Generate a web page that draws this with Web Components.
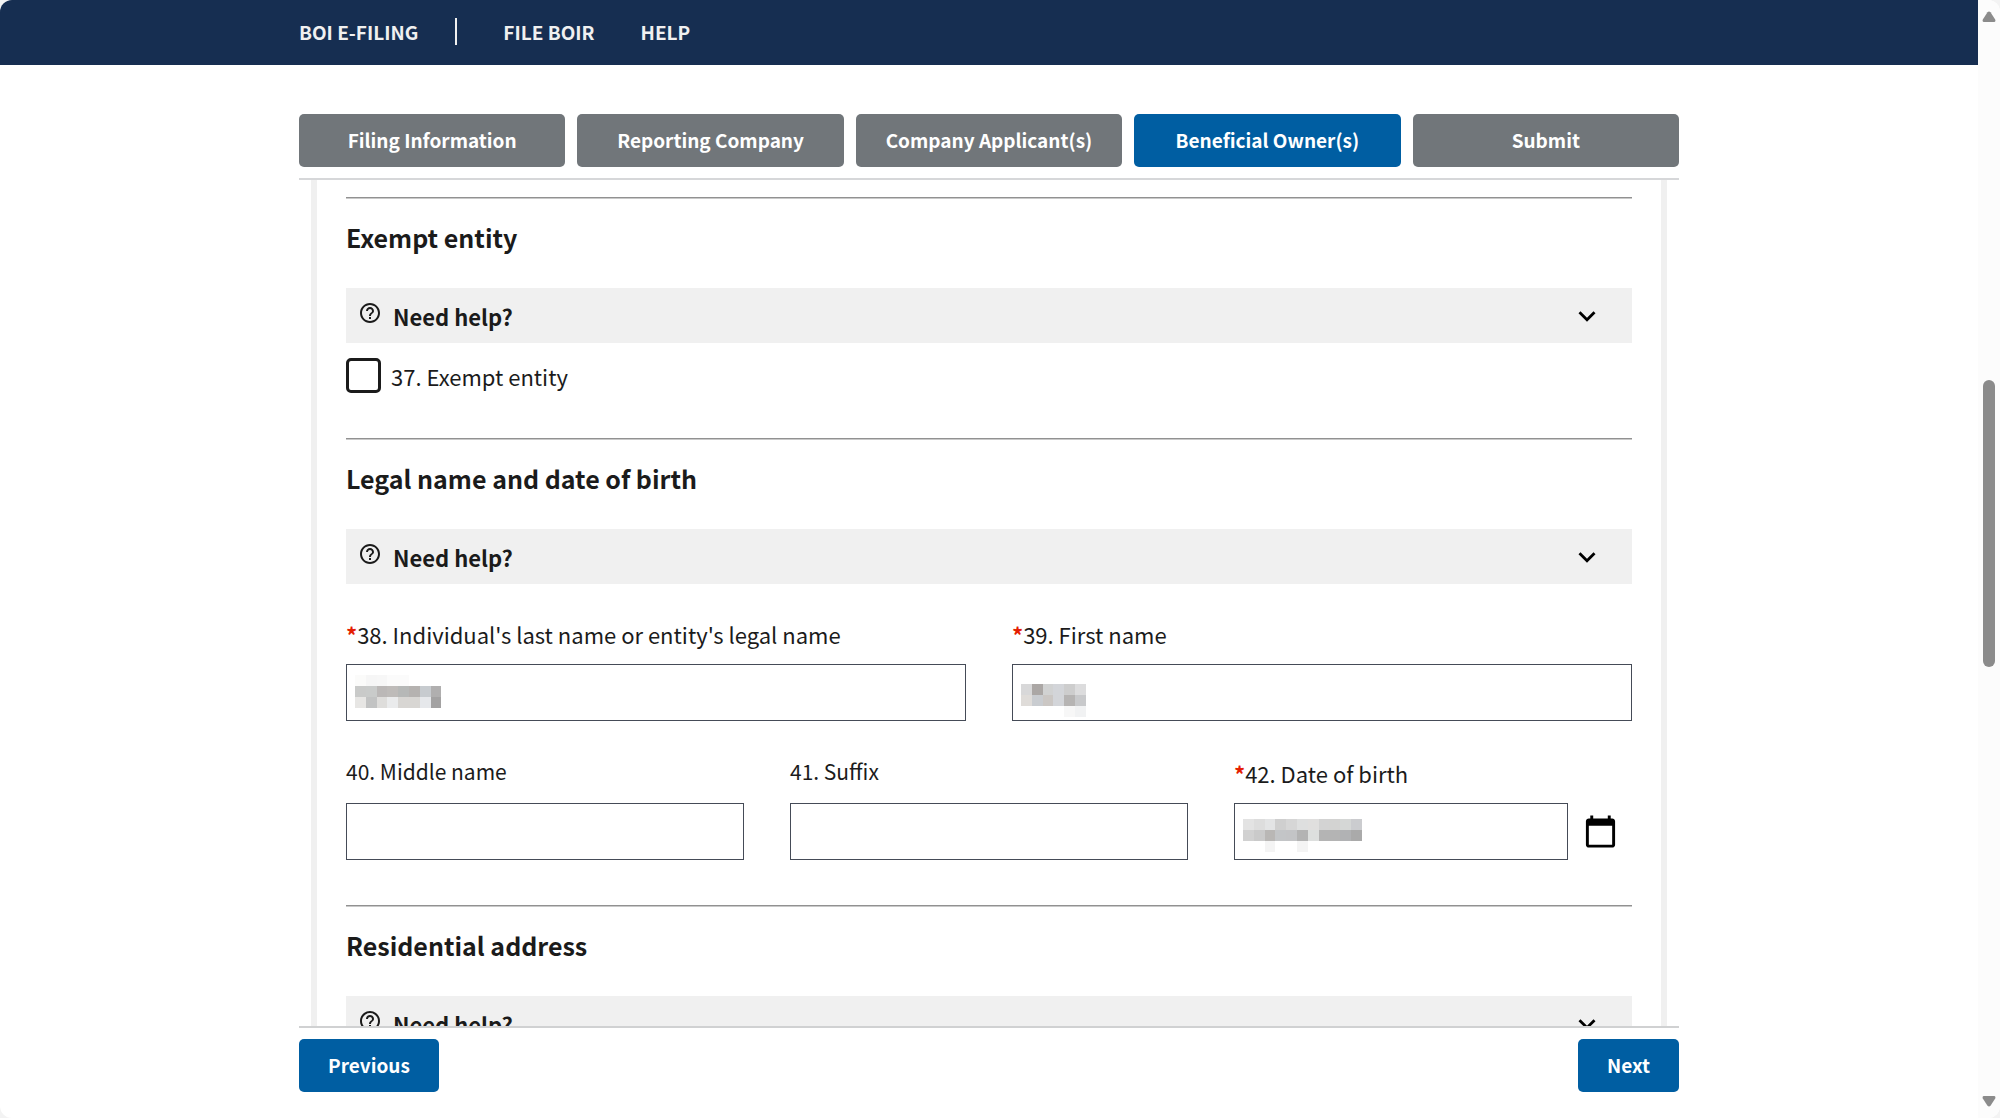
<!DOCTYPE html>
<html lang="en">
<head>
<meta charset="utf-8">
<meta name="viewport" content="width=device-width, initial-scale=1">
<title>BOI E-Filing</title>
<style>
  body {
    margin: 0;
    background: #f3f3f3;
    color: #1b1b1b;
    font-family: "Noto Sans CJK SC", "Open Sans", sans-serif;
    font-size: 22px;
    line-height: 32px;
  }
</style>
</head>
<body>
<boi-app>
  <boi-header slot="header"></boi-header>
  <step-nav slot="steps">
    <step-tab>Filing Information</step-tab>
    <step-tab>Reporting Company</step-tab>
    <step-tab>Company Applicant(s)</step-tab>
    <step-tab current>Beneficial Owner(s)</step-tab>
    <step-tab>Submit</step-tab>
  </step-nav>

  <form-section heading="Exempt entity">
    <check-field label="37. Exempt entity"></check-field>
  </form-section>

  <form-section heading="Legal name and date of birth">
    <field-grid>
      <text-field class="half" required label="38. Individual's last name or entity's legal name" mask="last"></text-field>
      <text-field class="half" required label="39. First name" mask="first"></text-field>
      <text-field label="40. Middle name"></text-field>
      <text-field label="41. Suffix"></text-field>
      <text-field required calendar label="42. Date of birth" mask="birth"></text-field>
    </field-grid>
  </form-section>

  <form-section heading="Residential address"></form-section>

  <pager-bar slot="footer"></pager-bar>
</boi-app>

<script>
class BoiApp extends HTMLElement {
  constructor() {
    super();
    this.attachShadow({ mode: "open" });
  }

  connectedCallback() {
    this.shadowRoot.innerHTML = `
      <style>
        :host {
          display: flex;
          height: 100vh;
          overflow: hidden;
          border-radius: 12px;
          background: #fff;
        }
        .page {
          flex: 1;
          min-width: 0;
          display: flex;
          flex-direction: column;
        }
        .wrap {
          flex: 1;
          min-height: 0;
          display: flex;
          flex-direction: column;
          box-sizing: border-box;
          width: 100%;
          max-width: 1380px;
          margin: 0 auto;
          padding-top: 49px;
        }
        main {
          flex: 1;
          min-height: 0;
          overflow: hidden;
          border-top: 2px solid #d6d7d9;
          border-bottom: 2px solid #d0d1d2;
        }
        .card {
          margin: 0 12px;
          padding: 17px 29px 0;
          border: solid #f0f0f0;
          border-width: 0 6px;
        }
      </style>
      <div class="page">
        <slot name="header"></slot>
        <div class="wrap">
          <slot name="steps"></slot>
          <main><div class="card"><slot></slot></div></main>
          <slot name="footer"></slot>
        </div>
      </div>
      <scroll-rail></scroll-rail>
    `;
  }
}

customElements.define("boi-app", BoiApp);

class BoiHeader extends HTMLElement {
  constructor() {
    super();
    this.attachShadow({ mode: "open" });
  }

  connectedCallback() {
    this.shadowRoot.innerHTML = `
      <style>
        :host {
          display: block;
          background: #162e51;
        }
        nav {
          display: flex;
          align-items: center;
          box-sizing: border-box;
          max-width: 1380px;
          height: 65px;
          margin: 0 auto;
          padding-bottom: 2px;
          font-size: 19px;
          font-weight: 700;
        }
        a {
          color: #f0f0f0;
          text-decoration: none;
        }
        .brand {
          padding-right: 37px;
          margin-right: 46px;
          border-right: 2px solid #f0f0f0;
          line-height: 27px;
        }
        .link { margin-right: 46px; }
      </style>
      <nav aria-label="Primary">
        <a class="brand" href="#">BOI E-FILING</a>
        <a class="link" href="#">FILE BOIR</a>
        <a class="link" href="#">HELP</a>
      </nav>
    `;
  }
}

customElements.define("boi-header", BoiHeader);

class StepNav extends HTMLElement {
  constructor() {
    super();
    this.attachShadow({ mode: "open" });
  }

  connectedCallback() {
    this.shadowRoot.innerHTML = `
      <style>
        :host { display: block; }
        nav {
          display: grid;
          grid-auto-flow: column;
          grid-auto-columns: 1fr;
          gap: 12px;
          padding-bottom: 11px;
        }
      </style>
      <nav aria-label="Filing steps"><slot></slot></nav>
    `;
  }
}

customElements.define("step-nav", StepNav);

class StepTab extends HTMLElement {
  constructor() {
    super();
    this.attachShadow({ mode: "open" });
  }

  connectedCallback() {
    const current = this.hasAttribute("current");
    this.shadowRoot.innerHTML = `
      <style>
        :host { display: block; }
        button {
          width: 100%;
          height: 53px;
          padding: 0 0 2px;
          border: 0;
          border-radius: 5px;
          background: ${current ? "#005ea2" : "#71767a"};
          color: #fff;
          font: inherit;
          font-size: 19px;
          font-weight: 700;
        }
      </style>
      <button type="button" ${current ? 'aria-current="step"' : ""}><slot></slot></button>
    `;
  }
}

customElements.define("step-tab", StepTab);

class FormSection extends HTMLElement {
  constructor() {
    super();
    this.attachShadow({ mode: "open" });
  }

  connectedCallback() {
    this.shadowRoot.innerHTML = `
      <style>
        :host {
          display: block;
          padding-bottom: 45px;
        }
        hr {
          margin: 0;
          border: 0;
          border-top: 1px solid #919191;
          border-bottom: 1px solid #c9c9c9;
        }
        h2 {
          margin: 22px 0 35px;
          font-size: 25px;
          line-height: 32px;
          font-weight: 700;
        }
      </style>
      <hr>
      <h2>${this.getAttribute("heading")}</h2>
      <help-toggle></help-toggle>
      <slot></slot>
    `;
  }
}

customElements.define("form-section", FormSection);

class HelpToggle extends HTMLElement {
  constructor() {
    super();
    this.attachShadow({ mode: "open" });
  }

  connectedCallback() {
    this.shadowRoot.innerHTML = `
      <style>
        :host { display: block; }
        button {
          display: flex;
          align-items: center;
          width: 100%;
          height: 55px;
          padding: 0 28px 0 12px;
          border: 0;
          background: #f0f0f0;
          color: inherit;
          font: inherit;
          font-weight: 700;
          text-align: left;
        }
        span {
          flex: 1;
          margin-left: 11px;
        }
        .help { margin-bottom: 6px; }
      </style>
      <button type="button" aria-expanded="false">
        <svg class="help" width="24" height="24" viewBox="0 0 24 24" fill="#1b1b1b" aria-hidden="true">
          <path d="M11 18h2v-2h-2v2zm1-16C6.480 2 2 6.480 2 12s4.480 10 10 10 10-4.480 10-10S17.520 2 12 2zm0 18c-4.410 0-8-3.590-8-8s3.590-8 8-8 8 3.590 8 8-3.590 8-8 8zm0-14c-2.210 0-4 1.790-4 4h2c0-1.100.9-2 2-2s2 .9 2 2c0 2-3 1.750-3 5h2c0-2.250 3-2.500 3-5 0-2.210-1.790-4-4-4z"/>
        </svg>
        <span>Need help?</span>
        <svg width="34" height="34" viewBox="0 0 24 24" aria-hidden="true">
          <path d="M7.410 8.590 12 13.170l4.590-4.580L18 10l-6 6-6-6z"/>
        </svg>
      </button>
    `;
  }
}

customElements.define("help-toggle", HelpToggle);

class CheckField extends HTMLElement {
  constructor() {
    super();
    this.attachShadow({ mode: "open" });
  }

  connectedCallback() {
    this.shadowRoot.innerHTML = `
      <style>
        :host {
          display: flex;
          align-items: center;
          gap: 10px;
          padding-top: 15px;
        }
        input {
          appearance: none;
          width: 35px;
          height: 35px;
          margin: 0;
          border: 3px solid #1b1b1b;
          border-radius: 5px;
          background: #fff;
        }
      </style>
      <input type="checkbox" id="box">
      <label for="box">${this.getAttribute("label")}</label>
    `;
  }
}

customElements.define("check-field", CheckField);

class FieldGrid extends HTMLElement {
  constructor() {
    super();
    this.attachShadow({ mode: "open" });
  }

  connectedCallback() {
    this.shadowRoot.innerHTML = `
      <style>
        :host {
          display: grid;
          grid-template-columns: repeat(6, 1fr);
          align-items: end;
          gap: 34px 46px;
          padding-top: 34px;
        }
        ::slotted(*) { grid-column: span 2; }
        ::slotted(.half) { grid-column: span 3; }
      </style>
      <slot></slot>
    `;
  }
}

customElements.define("field-grid", FieldGrid);

// Blocks that hide personal values; "-" leaves a cell empty
const MASKS = {
  last: {
    top: 11,
    rows: [
      "fbfbfa f6f6f6 f7f7f7 fbfbfb fbfbfb - - -",
      "c9cac9 c9cbca bbb8b7 bebbb9 b6b8b7 b5b2b0 c7cbcf b0afaf",
      "e7e6e4 c2c3c3 dedddb eaebec d8d6d3 d8d6d3 e6e8eb a3a2a2",
    ],
  },
  first: {
    top: 20,
    rows: [
      "d8d8d9 aba7a5 d1d2d2 d3d5d9 cdcdcd dcdcdd",
      "dfdcd9 c9ccd0 cbc7c4 d3d5d9 b6b4b3 c8c9cb",
      "- - - - f7f7f7 f1f2f3",
    ],
  },
  birth: {
    top: 16,
    rows: [
      "e3e3e3 dddddd e3e4e5 cfcfcf d6d6d6 dedfdf e0dfde d3d3d3 d3d3d2 d5d7d6 cbcccf",
      "d1d1d1 cacaca b9b7b5 c3c5c7 c3c4c6 b3b3b3 dddfde b4b4b4 b4b4b4 b1b2b4 aaaaaa",
      "- - f4f4f4 - - f4f4f4 - - - - -",
    ],
  },
};

function drawMask(name) {
  const mask = MASKS[name];
  if (!mask) return "";
  let cells = "";
  mask.rows.forEach((row, y) => {
    row.split(" ").forEach((color, x) => {
      if (color === "-") return;
      cells += `<rect x="${x * 10.8}" y="${mask.top + y * 11}" width="10.8" height="11" fill="#${color}"/>`;
    });
  });
  return `<svg class="mask" width="120" height="57" shape-rendering="crispEdges" aria-hidden="true">${cells}</svg>`;
}

class TextField extends HTMLElement {
  constructor() {
    super();
    this.attachShadow({ mode: "open" });
  }

  connectedCallback() {
    const required = this.hasAttribute("required");
    const calendar = this.hasAttribute("calendar");
    this.shadowRoot.innerHTML = `
      <style>
        :host {
          display: flex;
          flex-direction: column;
          gap: 16px;
          font-size: 21px;
        }
        :host([required]) {
          gap: 14px;
          font-size: 22px;
        }
        b { color: #e41d02; }
        .row {
          display: flex;
          align-items: center;
        }
        .box {
          position: relative;
          flex: 1;
          min-width: 0;
        }
        input {
          display: block;
          box-sizing: border-box;
          width: 100%;
          height: 57px;
          padding: 0 10px;
          border: 1px solid #454b57;
          outline: 0;
          background: #fff;
          color: inherit;
          font: inherit;
        }
        .mask {
          position: absolute;
          left: 9px;
          top: 0;
        }
        button {
          display: flex;
          align-items: center;
          justify-content: center;
          width: 64px;
          height: 57px;
          padding: 0;
          border: 0;
          background: none;
        }
      </style>
      <label for="field">${required ? "<b>*</b>" : ""}${this.getAttribute("label")}</label>
      <div class="row">
        <div class="box">
          <input type="text" id="field" ${required ? "required" : ""}>
          ${drawMask(this.getAttribute("mask"))}
        </div>
        ${calendar ? `
        <button type="button" aria-label="Toggle calendar">
          <svg width="35" height="35" viewBox="0 0 24 24" aria-hidden="true">
            <path d="M20 3h-1V1h-2v2H7V1H5v2H4c-1.100 0-2 .9-2 2v16c0 1.100.9 2 2 2h16c1.100 0 2-.9 2-2V5c0-1.100-.9-2-2-2zm0 18H4V8h16v13z"/>
          </svg>
        </button>` : ""}
      </div>
    `;
  }
}

customElements.define("text-field", TextField);

class PagerBar extends HTMLElement {
  constructor() {
    super();
    this.attachShadow({ mode: "open" });
  }

  connectedCallback() {
    this.shadowRoot.innerHTML = `
      <style>
        :host {
          display: flex;
          justify-content: space-between;
          padding: 11px 0 26px;
        }
        button {
          height: 53px;
          padding: 0 29px 2px;
          border: 0;
          border-radius: 5px;
          background: #005ea2;
          color: #fff;
          font: inherit;
          font-size: 19px;
          font-weight: 700;
        }
      </style>
      <button type="button">Previous</button>
      <button type="button">Next</button>
    `;
  }
}

customElements.define("pager-bar", PagerBar);

class ScrollRail extends HTMLElement {
  constructor() {
    super();
    this.attachShadow({ mode: "open" });
  }

  connectedCallback() {
    this.shadowRoot.innerHTML = `
      <style>
        :host {
          display: flex;
          flex-direction: column;
          align-items: center;
          box-sizing: border-box;
          width: 22px;
          padding: 11px 0;
          background: #fcfcfc;
        }
        .before { flex: 358; }
        .thumb {
          flex: 287;
          width: 12px;
          border-radius: 6px;
          background: #8b8b8b;
        }
        .after { flex: 429; }
      </style>
      <svg width="14" height="11" viewBox="0 0 14 11" fill="#8b8b8b" aria-hidden="true">
        <path d="M5.500 1.200Q7-.4 8.500 1.200L13.200 8.500Q14 11 12 11H2Q0 11 .8 8.500z"/>
      </svg>
      <div class="before"></div>
      <div class="thumb"></div>
      <div class="after"></div>
      <svg width="14" height="11" viewBox="0 0 14 11" fill="#8b8b8b" aria-hidden="true">
        <path d="M5.500 9.800Q7 11.400 8.500 9.800L13.200 2.500Q14 0 12 0H2Q0 0 .8 2.500z"/>
      </svg>
    `;
  }
}

customElements.define("scroll-rail", ScrollRail);
</script>
</body>
</html>
